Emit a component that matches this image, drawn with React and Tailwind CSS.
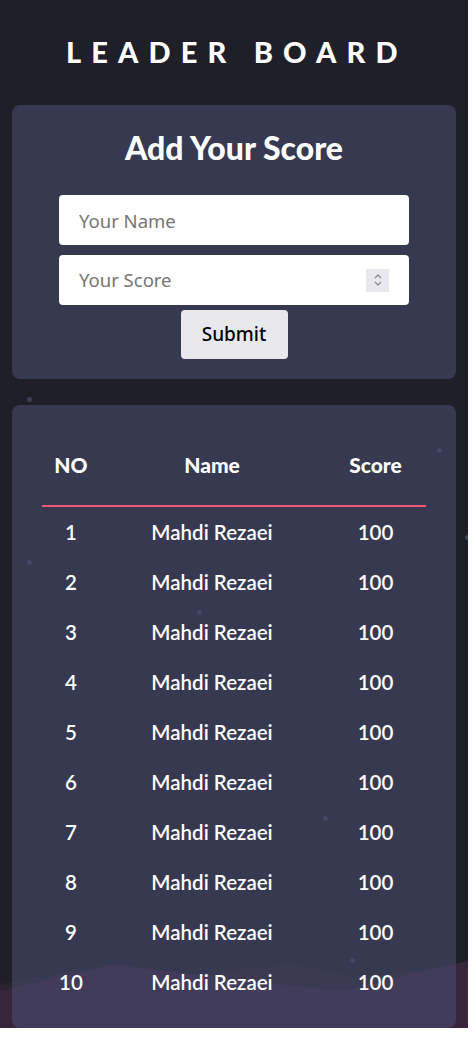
import React from 'react';

const rows = Array.from({ length: 10 }, (_, i) => ({ no: i + 1, name: 'Mahdi Rezaei', score: 100 }));

// faint stars scattered over the background
const stars = [
  [29, 399], [29, 562], [439, 450], [467, 537], [199, 612], [325, 818], [352, 960],
];

function Mountains() {
  return (
    <svg className="absolute left-0 bottom-0 w-full h-[80px]" viewBox="0 0 468 80" preserveAspectRatio="none">
      <path d="M0 36 L112 16 L200 26 L290 16 L360 30 L468 14 L468 80 L0 80 Z" fill="#28232f" />
      <path d="M0 43 L112 17 L340 43 L468 13 L468 80 L0 80 Z" fill="#35263c" />
    </svg>
  );
}

export default function App() {
  return (
    <div
      className="relative w-[468px] bg-[#1f1f29] overflow-hidden"
      style={{ fontFamily: 'Lato, "Noto Sans", sans-serif' }}
    >
      <Mountains />
      {stars.map(([x, y], i) => (
        <span
          key={i}
          className="absolute w-[5px] h-[5px] rounded-full bg-[#3e4058]"
          style={{ left: x - 2, top: y - 2 }}
        />
      ))}

      <div className="relative flex flex-col items-stretch px-3">
        <h1 className="pt-[36px] pb-[37px] text-center text-[29px] leading-[32px] font-black text-white tracking-[0.35em] pl-[0.2em]">
          LEADER BOARD
        </h1>

        {/* add score form */}
        <div className="rounded-lg bg-[rgba(72,76,111,0.58)] flex flex-col items-center pt-[24px] pb-[20px]">
          <h2 className="text-[32px] leading-[38px] font-black text-white">Add Your Score</h2>
          <input
            className="mt-[28px] w-[350px] h-[50px] rounded-[4px] bg-white px-5 text-[18.5px] text-gray-800 placeholder:text-[#767676] outline-none"
            style={{ fontFamily: '"Noto Sans", sans-serif' }}
            placeholder="Your Name"
          />
          <div className="mt-[10px] w-[350px] h-[50px] rounded-[4px] bg-white flex items-center pl-5 pr-5">
            <span className="flex-1 text-[18.5px] text-[#767676]" style={{ fontFamily: '"Noto Sans", sans-serif' }}>
              Your Score
            </span>
            <span className="w-[23px] h-[23px] bg-[#e9e8ed] flex flex-col items-center justify-center">
              <svg width="10" height="16" viewBox="0 0 10 16" fill="none" stroke="#8a8a99" strokeWidth="1.3">
                <path d="M2 6 L5 3 L8 6" />
                <path d="M2 10 L5 13 L8 10" />
              </svg>
            </span>
          </div>
          <button
            className="mt-[5px] w-[107px] h-[49px] rounded-[4px] bg-[#e9e8ed] text-[19px] font-medium text-black"
            style={{ fontFamily: '"Noto Sans", sans-serif' }}
          >
            Submit
          </button>
        </div>

        {/* leader board table */}
        <div className="mt-[26px] rounded-lg bg-[rgba(72,76,111,0.58)] px-[30px] pt-[20px] pb-[21px]">
          <div className="grid grid-cols-[58px_224px_103px] h-[82px] items-center border-b-2 border-[#ef5a7a] text-white text-[21px] font-black text-center">
            <span>NO</span>
            <span>Name</span>
            <span>Score</span>
          </div>
          {rows.map(r => (
            <div key={r.no} className="grid grid-cols-[58px_224px_103px] h-[50px] items-center text-white text-[20.5px] font-semibold text-center">
              <span>{r.no}</span>
              <span>{r.name}</span>
              <span>{r.score}</span>
            </div>
          ))}
        </div>
      </div>
    </div>
  );
}
